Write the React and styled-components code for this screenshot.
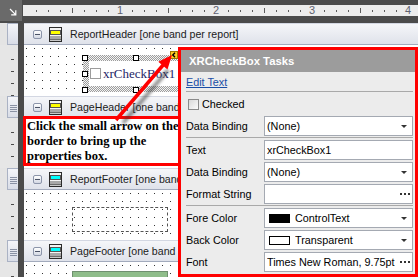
// libs
import styled, { createGlobalStyle } from 'styled-components'

// data
const ticks = Array.from({ length: 33 }, (_, i) => i + 1)

const bands = [
    { name: 'ReportHeader', note: 'one band per report', color: '#ffff00', grip: false, height: 51, content: 'selection' },
    { name: 'PageHeader', note: 'one band per page', color: '#ffff00', grip: true, height: 50 },
    { name: 'ReportFooter', note: 'one band per report', color: '#00ffff', grip: true, height: 50, content: 'empty' },
    { name: 'PageFooter', note: 'one band per page', color: '#00ffff', grip: true, height: 40, content: 'field' },
]

const fieldGroups = [
    [{ label: 'Data Binding', value: '(None)', tail: 'drop' }],
    [
        { label: 'Text', value: 'xrCheckBox1' },
        { label: 'Data Binding', value: '(None)', tail: 'drop' },
        { label: 'Format String', value: '', tail: 'more' },
    ],
    [
        { label: 'Fore Color', value: 'ControlText', swatch: '#000000', tail: 'drop' },
        { label: 'Back Color', value: 'Transparent', swatch: '#ffffff', tail: 'drop' },
        { label: 'Font', value: 'Times New Roman, 9.75pt', tail: 'more' },
    ],
]

const BandIcon = ({ color }) => (
    <IconSvg width='13' height='15' viewBox='0 0 13 15'>
        <rect x='0.5' y='0.5' width='12' height='14' fill='#c9c9c9' stroke='#2b2b2b' />
        <rect x='1' y='1' width='11' height='2' fill='#f2f2f2' />
        <rect x='1.5' y='3.5' width='10' height='4' fill={color} stroke='#555' />
        <rect x='1' y='8' width='11' height='1' fill='#f4f4f4' />
        <rect x='1' y='9' width='11' height='3' fill='#a8a8a8' />
        <line x1='1' y1='12.5' x2='12' y2='12.5' stroke='#6d6d6d' />
    </IconSvg>
)

const CanvasContent = ({ kind }) => {
    if (kind === 'selection') {
        return (
            <>
                <Selection>
                    <Handle $x={-1} $y={0} />
                    <Handle $x={50} $y={0} />
                    <Handle $x={-1} $y={16} />
                    <Handle $x={-1} $y={32} />
                    <Handle $x={50} $y={32} />
                    <Control>
                        <ControlCheck />
                        <ControlText>xrCheckBox1</ControlText>
                    </Control>
                </Selection>
                <SmartTag>
                    <svg width='6' height='6' viewBox='0 0 6 6'>
                        <path d='M4 0.8L1.8 3L4 5.2' stroke='#000' strokeWidth='1.4' fill='none' />
                    </svg>
                </SmartTag>
            </>
        )
    }
    if (kind === 'empty') return <EmptyControl />
    if (kind === 'field') return <GreenField />
    return null
}

const FieldRow = ({ field }) => (
    <Row>
        <FieldLabel>{field.label}</FieldLabel>
        <FieldBox>
            {field.swatch && <Swatch $color={field.swatch} />}
            <FieldValue>{field.value}</FieldValue>
            {field.tail === 'drop' && <DropArrow />}
            {field.tail === 'more' && <MoreDots />}
        </FieldBox>
    </Row>
)

const App = () => {
    return (
        <Frame>
            <GlobalStyle />

            <TopBar>
                <Corner>
                    <svg width='8' height='8' viewBox='0 0 8 8'>
                        <path d='M1 1L6.3 6.3M2.2 6.8H6.8V2.2' stroke='#fff' strokeWidth='1.2' fill='none' />
                    </svg>
                </Corner>
                <HRuler>
                    {ticks.map(k => (
                        <TickCell key={k}>
                            {k % 8 === 0 ? <TickNumber>{k / 8}</TickNumber> : <Tick $tall={k % 4 === 0} />}
                        </TickCell>
                    ))}
                </HRuler>
            </TopBar>

            {bands.map(band => (
                <div key={band.name}>
                    <HeaderRow>
                        <RulerGrip>
                            <GripBox>{band.grip && <GripLines />}</GripBox>
                        </RulerGrip>
                        <BandHeader>
                            <Toggle />
                            <BandIcon color={band.color} />
                            <BandTitle>{band.name} [{band.note}]</BandTitle>
                        </BandHeader>
                    </HeaderRow>
                    <BodyRow $h={band.height}>
                        <VRuler />
                        <Canvas>
                            <CanvasContent kind={band.content} />
                        </Canvas>
                    </BodyRow>
                </div>
            ))}

            <Callout>
                Click the small arrow on the<br />
                border to bring up the<br />
                properties box.
            </Callout>

            <ArrowLayer width='418' height='277' viewBox='0 0 418 277'>
                <defs>
                    <filter id='arrowShadow' x='-20%' y='-20%' width='140%' height='140%'>
                        <feGaussianBlur stdDeviation='1.8' />
                    </filter>
                </defs>
                <line x1='123' y1='123' x2='168' y2='70' stroke='#3a3a3a' strokeWidth='4' opacity='0.55' filter='url(#arrowShadow)' />
                <line x1='116' y1='120' x2='164' y2='64' stroke='#ff0000' strokeWidth='3.5' />
                <polygon points='172,55 167.5,69.5 158.3,61.7' fill='#ff0000' />
            </ArrowLayer>

            <TasksPanel>
                <PanelTitle>XRCheckBox Tasks</PanelTitle>
                <PanelBody>
                    <LinkRow>
                        <ActionLink>Edit Text</ActionLink>
                    </LinkRow>
                    <Divider />
                    <CheckRow>
                        <CheckMark />
                        <span>Checked</span>
                    </CheckRow>
                    {fieldGroups.map((group, i) => (
                        <div key={i}>
                            {i > 0 && <Divider />}
                            {group.map((field, j) => <FieldRow key={j} field={field} />)}
                        </div>
                    ))}
                </PanelBody>
            </TasksPanel>
        </Frame>
    )
}

export default App

// styles
const GlobalStyle = createGlobalStyle`
    html, body {
        margin: 0;
        padding: 0;
        background: #fff;
    }

    body {
        font-family: "Liberation Sans", Arial, sans-serif;
    }

    * {
        box-sizing: border-box;
    }
`

const Frame = styled.div`
    position: relative;
    width: 418px;
    height: 277px;
    overflow: hidden;
    background: #4b4b4b;
`

const TopBar = styled.div`
    display: flex;
    height: 23px;
    background: #4b4b4b;
`

const Corner = styled.div`
    width: 22px;
    height: 21px;
    padding: 8px 0 0 9px;
    background: #6a6a6a;

    svg {
        display: block;
    }
`

const HRuler = styled.div`
    flex: 1;
    display: flex;
    align-items: center;
    height: 11px;
    margin: 5px 0 0 1px;
    padding-left: 7px;
    background: #ececec;
    overflow: hidden;
`

const TickCell = styled.div`
    flex: none;
    display: flex;
    align-items: center;
    justify-content: center;
    width: 12px;
    height: 11px;
`

const Tick = styled.span`
    width: 1px;
    height: ${p => (p.$tall ? '5px' : '2px')};
    background: #5a5a5a;
`

const TickNumber = styled.span`
    font-size: 11px;
    line-height: 11px;
    color: #5f6270;
`

const HeaderRow = styled.div`
    display: grid;
    grid-template-columns: 18px 1fr;
    column-gap: 6px;
    height: 22px;
`

const RulerGrip = styled.div`
    padding-left: 7px;
    background: #e4e4e4;
`

const GripBox = styled.div`
    display: flex;
    align-items: center;
    justify-content: center;
    height: 100%;
    border: 1px solid #aab2c4;
    border-right: none;
    background: linear-gradient(#f4f5f9, #d9dde7);
`

const GripLines = styled.span`
    width: 7px;
    height: 1px;
    margin-top: -4px;
    background: #8a92a4;
    box-shadow: 0 2px #8a92a4, 0 4px #8a92a4, 0 6px #8a92a4;
`

const BandHeader = styled.div`
    display: flex;
    align-items: center;
    padding-left: 9px;
    border-top: 1px solid #d3d7e2;
    border-bottom: 1px solid #a3abbd;
    background: linear-gradient(#f5f6f9, #dfe2ea);
    color: #1b1b1b;
    font-size: 10.6px;
    white-space: nowrap;
`

const Toggle = styled.span`
    position: relative;
    flex: none;
    width: 9px;
    height: 9px;
    border: 1px solid #8c95aa;
    border-radius: 2px;
    background: linear-gradient(#ffffff, #d3d8e3);

    &::after {
        content: '';
        position: absolute;
        left: 1px;
        top: 3px;
        width: 5px;
        height: 1px;
        background: #4a5266;
    }
`

const IconSvg = styled.svg`
    flex: none;
    margin-left: 7px;
`

const BandTitle = styled.span`
    margin-left: 8px;
`

const BodyRow = styled.div`
    display: grid;
    grid-template-columns: 18px 1fr;
    column-gap: 6px;
    height: ${p => p.$h}px;
`

const VRuler = styled.div`
    background-color: #e6e6e6;
    background-image: repeating-linear-gradient(to bottom, transparent 0 11px, #4a4a4a 11px 12px);
    background-size: 3px 100%;
    background-position: 11px 3px;
    background-repeat: no-repeat;
`

const Canvas = styled.div`
    position: relative;
    background-color: #fff;
    background-image: conic-gradient(from 270deg at 1px 1px, #333 90deg, transparent 0);
    background-size: 8px 8px;
    background-position: 2px 3px;
`

const Selection = styled.div`
    position: absolute;
    left: 59px;
    top: 10px;
    width: 100px;
    height: 37px;
    padding: 6px 0 6px 6px;
    background: repeating-conic-gradient(#9c9c9c 0 25%, #f4f4f4 0 50%) 0 0 / 2px 2px;
`

const Handle = styled.span`
    position: absolute;
    left: ${p => p.$x}px;
    top: ${p => p.$y}px;
    width: 6px;
    height: 6px;
    border: 1px solid #000;
    background: #fff;
`

const Control = styled.div`
    display: flex;
    align-items: center;
    height: 100%;
    padding-left: 1px;
    background: #fff;
`

const ControlCheck = styled.span`
    flex: none;
    width: 11px;
    height: 11px;
    margin-right: 2px;
    border: 1px solid #9c9c9c;
    background: #fff;
`

const ControlText = styled.span`
    font-family: "Liberation Serif", "Times New Roman", serif;
    font-size: 13px;
    color: #1e1e66;
    white-space: nowrap;
`

const SmartTag = styled.div`
    position: absolute;
    left: 146px;
    top: 6px;
    display: flex;
    align-items: center;
    justify-content: center;
    width: 8px;
    height: 8px;
    border: 1px solid #a07a00;
    background: #ffcc22;

    svg {
        display: block;
    }
`

const EmptyControl = styled.div`
    position: absolute;
    left: 48px;
    top: 17px;
    width: 96px;
    height: 25px;
    border: 1px dashed #555;
`

const GreenField = styled.div`
    position: absolute;
    left: 48px;
    top: 9px;
    width: 96px;
    height: 20px;
    border: 1px solid #6f8f6f;
    background: #8fbd8a;
`

const Callout = styled.div`
    position: absolute;
    left: 23px;
    top: 116px;
    width: 160px;
    height: 50px;
    padding-left: 1px;
    border: 3px solid #ff0000;
    background: #fff;
    color: #000;
    font-family: "Liberation Serif", "Times New Roman", serif;
    font-size: 12.5px;
    font-weight: bold;
    line-height: 15px;
    white-space: nowrap;
`

const ArrowLayer = styled.svg`
    position: absolute;
    left: 0;
    top: 0;
    pointer-events: none;
`

const TasksPanel = styled.div`
    position: absolute;
    left: 178px;
    top: 47px;
    display: flex;
    flex-direction: column;
    width: 240px;
    height: 230px;
    border: 3px solid #ff0000;
    background: #ececec;
    color: #000;
    font-size: 10.8px;
`

const PanelTitle = styled.div`
    display: flex;
    align-items: center;
    flex: none;
    height: 22px;
    padding-left: 8px;
    background: #9c9c9c;
    color: #fff;
    font-size: 11.3px;
    font-weight: bold;
`

const PanelBody = styled.div`
    padding: 0 2px 0 5px;
`

const LinkRow = styled.div`
    display: flex;
    align-items: center;
    height: 19px;
`

const ActionLink = styled.a`
    color: #1a4ea6;
    text-decoration: underline;
    cursor: pointer;
`

const Divider = styled.div`
    height: 1px;
    margin-bottom: 1px;
    background: #a9a9a9;
`

const CheckRow = styled.div`
    display: flex;
    align-items: center;
    gap: 3px;
    height: 22px;
`

const CheckMark = styled.span`
    width: 11px;
    height: 11px;
    margin-left: 2px;
    border: 1px solid #8a8a8a;
    background: linear-gradient(135deg, #d8d8d8, #fbfbfb);
`

const Row = styled.div`
    display: grid;
    grid-template-columns: 78px 1fr;
    align-items: center;
    height: 22px;
`

const FieldLabel = styled.span`
    white-space: nowrap;
`

const FieldBox = styled.div`
    display: flex;
    align-items: center;
    height: 20px;
    padding: 0 4px 0 2px;
    border: 1px solid #a4a9b2;
    background: #fff;
    white-space: nowrap;
`

const FieldValue = styled.span`
    flex: 1;
    overflow: hidden;
`

const Swatch = styled.span`
    flex: none;
    width: 21px;
    height: 9px;
    margin: 0 5px 0 2px;
    border: 1px solid #000;
    background: ${p => p.$color};
`

const DropArrow = styled.span`
    flex: none;
    width: 0;
    height: 0;
    margin-right: 1px;
    border-left: 3px solid transparent;
    border-right: 3px solid transparent;
    border-top: 3px solid #333;
`

const MoreDots = styled.span`
    flex: none;
    width: 2px;
    height: 2px;
    margin-right: 6px;
    background: #333;
    box-shadow: 4px 0 #333, 8px 0 #333;
`
